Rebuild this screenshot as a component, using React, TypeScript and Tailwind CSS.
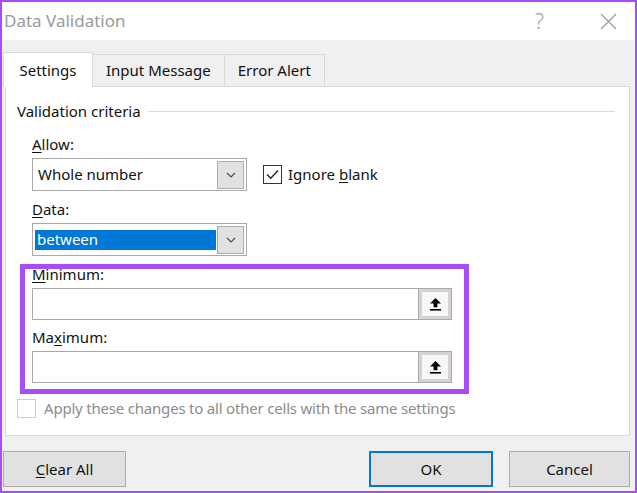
import React from 'react';

const font = { fontFamily: '"Segoe UI", "Noto Sans", Arial, sans-serif' };

function Chevron() {
  return (
    <svg width="10" height="6" viewBox="0 0 10 6" fill="none">
      <path d="M1 1l4 4 4-4" stroke="#4a4a4a" strokeWidth="1.1" />
    </svg>
  );
}

function RefArrow() {
  return (
    <svg width="13" height="13" viewBox="0 0 13 13">
      <path d="M6.5 0L12 5.6H8.4V9.2H4.6V5.6H1z" fill="#000" />
      <rect x="1" y="11" width="11" height="1.6" fill="#000" />
    </svg>
  );
}

function Select({ value, highlighted }: { value: string; highlighted?: boolean }) {
  return (
    <div className="flex h-[33px] w-[215px] items-center border border-[#a9a9a9] bg-white p-[2px]">
      <div
        className={
          highlighted
            ? 'flex h-[20px] flex-1 items-center bg-[#0078d7] pl-[2px] text-white'
            : 'flex flex-1 items-center pl-[3px] text-[#111]'
        }
      >
        {value}
      </div>
      <div className="ml-[1px] flex h-[28px] w-[27px] items-center justify-center border border-[#adadad] bg-[#e1e1e1]">
        <Chevron />
      </div>
    </div>
  );
}

function RangeInput() {
  return (
    <div className="flex h-[32px] w-[420px] border border-[#a9a9a9] bg-white">
      <div className="flex-1" />
      <div className="flex w-[33px] items-center justify-center border-l border-[#a9a9a9] bg-[#d4d4d4] p-[3px]">
        <div className="flex h-full w-full items-center justify-center bg-[#f7f7f7]">
          <RefArrow />
        </div>
      </div>
    </div>
  );
}

function Tab({ label, active }: { label: string; active?: boolean }) {
  return active ? (
    <div className="relative z-10 -mb-[1px] flex h-[35px] w-[90px] items-center justify-center border border-b-0 border-[#d9d9d9] bg-white text-[#111]">
      {label}
    </div>
  ) : (
    <div className="-ml-[1px] flex h-[32px] items-center border border-b-0 border-[#d9d9d9] bg-[#f0f0f0] px-[13px] text-[#111]">
      {label}
    </div>
  );
}

export default function App() {
  return (
    <div
      className="relative flex h-[493px] w-[637px] flex-col overflow-hidden border-2 border-[#a84cf6] bg-[#f0f0f0] text-[15px]"
      style={font}
    >
      {/* Title bar */}
      <div className="flex h-[38px] items-center bg-white pl-[2px]">
        <span className="text-[17px] text-[#9a9a9a]">Data Validation</span>
        <span className="ml-auto mr-[56px] text-[21px] font-light leading-none text-[#a0a0a0]">?</span>
        <svg width="17" height="17" viewBox="0 0 17 17" className="mr-[18px]">
          <path d="M1 1l15 15M16 1L1 16" stroke="#9a9a9a" strokeWidth="1.2" />
        </svg>
      </div>

      {/* Tabs */}
      <div className="ml-[1px] mt-[12px] flex items-end">
        <Tab label="Settings" active />
        <Tab label="Input Message" />
        <Tab label="Error Alert" />
      </div>

      {/* Panel */}
      <div className="ml-[3px] mr-[5px] h-[350px] border border-[#d9d9d9] bg-white">
        <div className="mt-[14px] flex h-[20px] items-center pl-[11px]">
          <span className="text-[#111]">Validation criteria</span>
          <div className="ml-[7px] mr-[14px] h-px flex-1 bg-[#dcdcdc]" />
        </div>

        <div className="pl-[26px]">
          <div className="mt-[13px] h-[20px] leading-[20px] text-[#111]">
            <u className="decoration-1 underline-offset-2">A</u>llow:
          </div>
          <div className="mt-[4px] flex items-center">
            <Select value="Whole number" />
            <div className="ml-[16px] flex items-center">
              <div className="flex h-[19px] w-[19px] items-center justify-center border border-[#333] bg-white">
                <svg width="13" height="11" viewBox="0 0 13 11" fill="none">
                  <path d="M1 5.5l3.8 3.8L12 1.5" stroke="#222" strokeWidth="1.4" />
                </svg>
              </div>
              <span className="ml-[6px] text-[#111]">
                Ignore <u className="decoration-1 underline-offset-2">b</u>lank
              </span>
            </div>
          </div>

          <div className="mt-[8px] h-[20px] leading-[20px] text-[#111]">
            <u className="decoration-1 underline-offset-2">D</u>ata:
          </div>
          <div className="mt-[4px]">
            <Select value="between" highlighted />
          </div>

          <div className="mt-[8px] h-[20px] leading-[20px] text-[#111]">
            <u className="decoration-1 underline-offset-2">M</u>inimum:
          </div>
          <div className="mt-[4px]">
            <RangeInput />
          </div>

          <div className="mt-[7px] h-[20px] leading-[20px] text-[#111]">
            Ma<u className="decoration-1 underline-offset-2">x</u>imum:
          </div>
          <div className="mt-[4px]">
            <RangeInput />
          </div>
        </div>

        <div className="ml-[11px] mt-[14px] flex items-center">
          <div className="h-[19px] w-[19px] border border-[#cccccc] bg-white" />
          <span className="ml-[8px] tracking-[-0.2px] text-[#8c8c8c]">
            Apply these changes to all other cells with the same settings
          </span>
        </div>
      </div>

      {/* Buttons */}
      <div className="mt-[15px] flex items-start">
        <button className="ml-[1px] h-[36px] w-[123px] border border-[#adadad] bg-[#e1e1e1] text-[#111]">
          <u className="decoration-1 underline-offset-2">C</u>lear All
        </button>
        <button className="ml-auto h-[36px] w-[124px] border-2 border-[#0078d7] bg-[#e1e1e1] text-[#111]">
          OK
        </button>
        <button className="ml-[16px] mr-[5px] h-[36px] w-[121px] border border-[#adadad] bg-[#e1e1e1] text-[#111]">
          Cancel
        </button>
      </div>

      {/* Highlight annotation */}
      <div className="pointer-events-none absolute left-[18px] top-[262px] h-[130px] w-[449px] border-[5px] border-[#a84cf6]" />
    </div>
  );
}
